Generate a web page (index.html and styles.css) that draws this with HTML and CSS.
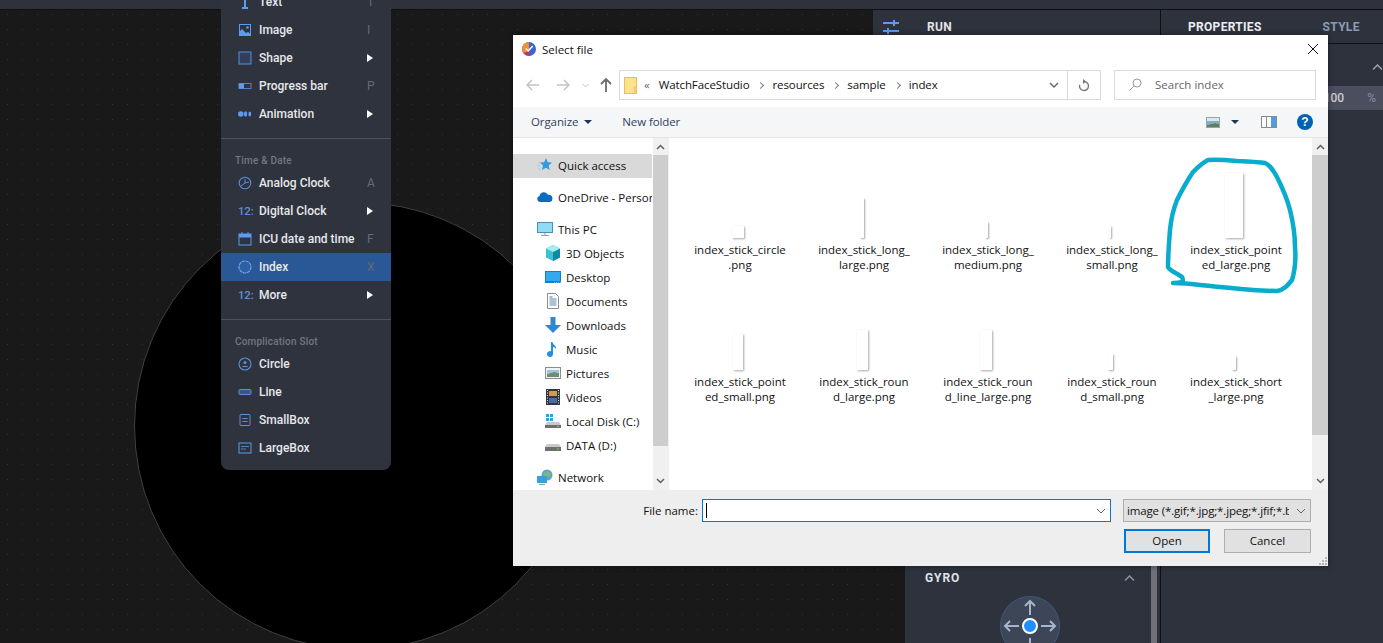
FILE: index.html
```html
<!DOCTYPE html>
<html lang="en">
<head>
    <meta charset="UTF-8">
    <title>Select file</title>
    <link rel="stylesheet" href="styles.css">
</head>
<body>
<div class="stage">
    <div class="topbar"></div>
    <div class="workspace">
        <div class="canvas"></div>
        <div class="run">
            <div class="run-head">
                <svg class="ico16" viewBox="0 0 16 16"><path d="M0 4h16M0 12h16" stroke="#5b9bf0" stroke-width="2"/><path d="M11 1v6M5 9v6" stroke="#5b9bf0" stroke-width="2"/></svg>
                <span>RUN</span>
            </div>
            <div class="run-body">
                <div class="run-gutter"></div>
                <div class="run-main">
                    <div class="gyro">
                        <div class="gyro-title">
                            <span>GYRO</span>
                            <svg width="11" height="6" viewBox="0 0 11 6"><path d="M1 5.500l4.500-4.500 4.500 4.500" fill="none" stroke="#8b92a3" stroke-width="1.500"/></svg>
                        </div>
                        <svg class="gyro-pad" width="60" height="60" viewBox="0 0 60 60">
                            <circle cx="30" cy="30" r="29.500" fill="#3d4657" stroke="#3e5a80"/>
                            <g fill="none" stroke="#a6b4ce" stroke-width="2">
                                <path d="M30 19V5.500M25 10l5-5 5 5"/>
                                <path d="M19 30H5.500M10 25l-5 5 5 5"/>
                                <path d="M41 30h13.500M50 25l5 5-5 5"/>
                                <path d="M30 42v14"/>
                            </g>
                            <circle cx="30" cy="30" r="7" fill="#1e8fff" stroke="#fff" stroke-width="2"/>
                        </svg>
                    </div>
                </div>
                <div class="run-scroll"></div>
            </div>
        </div>
        <div class="props">
            <div class="props-tabs">
                <span class="tab-on">PROPERTIES</span>
                <span class="tab-off">STYLE</span>
            </div>
            <div class="props-chev">
                <svg width="11" height="6" viewBox="0 0 11 6"><path d="M1 5.500l4.500-4.500 4.500 4.500" fill="none" stroke="#9aa0ae" stroke-width="1.500"/></svg>
            </div>
            <div class="props-field"><span>100</span><span class="unit">%</span></div>
        </div>
    </div>

    <div class="circle"></div>

    <div class="menu">
        <div class="menu-row">
            <svg class="mi" viewBox="0 0 14 14"><path d="M7 0v13M4 13h6" stroke="#5b9bf0" stroke-width="2" fill="none"/></svg>
            <span class="mt">Text</span><span class="key">T</span>
        </div>
        <div class="menu-row">
            <svg class="mi" viewBox="0 0 14 14"><rect x="1.500" y="1.500" width="11" height="11" fill="none" stroke="#5b9bf0"/><path d="M1 13V9l3-3 4 4 2-1 3 2v2z" fill="#5b9bf0"/><circle cx="9.500" cy="4.500" r="1.300" fill="#5b9bf0"/></svg>
            <span class="mt">Image</span><span class="key">I</span>
        </div>
        <div class="menu-row">
            <svg class="mi" viewBox="0 0 14 14"><rect x="1" y="1" width="12" height="12" fill="#2f3f5c" stroke="#4f82c8" stroke-width="1.200"/></svg>
            <span class="mt">Shape</span><span class="arrow"></span>
        </div>
        <div class="menu-row">
            <svg class="mi" viewBox="0 0 14 14"><rect x="1" y="4.500" width="12" height="5" fill="none" stroke="#4f82c8"/><rect x="1" y="4.500" width="5" height="5" fill="#5b9bf0"/></svg>
            <span class="mt">Progress bar</span><span class="key">P</span>
        </div>
        <div class="menu-row">
            <svg class="mi" viewBox="0 0 14 14"><circle cx="2.800" cy="7" r="2.800" fill="#5b9bf0"/><ellipse cx="7.600" cy="7" rx="1.600" ry="2.700" fill="#5b9bf0"/><ellipse cx="11.800" cy="7" rx="1.400" ry="2.500" fill="#5b9bf0"/></svg>
            <span class="mt">Animation</span><span class="arrow"></span>
        </div>
        <div class="menu-sep"></div>
        <div class="menu-label">Time &amp; Date</div>
        <div class="menu-row">
            <svg class="mi" viewBox="0 0 14 14"><circle cx="7" cy="7" r="5.800" fill="none" stroke="#5b8fd8" stroke-width="1.100"/><path d="M7 3v4l4-1M7 7l-4 3" fill="none" stroke="#5b8fd8"/></svg>
            <span class="mt">Analog Clock</span><span class="key">A</span>
        </div>
        <div class="menu-row">
            <span class="mi mi-txt">12:</span>
            <span class="mt">Digital Clock</span><span class="arrow"></span>
        </div>
        <div class="menu-row">
            <svg class="mi" viewBox="0 0 14 14"><rect x="1" y="2" width="12" height="11" fill="none" stroke="#5b9bf0"/><rect x="1" y="2" width="12" height="3.500" fill="#5b9bf0"/><path d="M4 0v3M10 0v3" stroke="#5b9bf0"/></svg>
            <span class="mt">ICU date and time</span><span class="key">F</span>
        </div>
        <div class="menu-row menu-row-on">
            <svg class="mi" viewBox="0 0 14 14"><circle cx="7" cy="7" r="6" fill="#2f5fa3" stroke="#6aa3ee" stroke-width="1.200" stroke-dasharray="3.400 .6"/></svg>
            <span class="mt">Index</span><span class="key">X</span>
        </div>
        <div class="menu-row">
            <span class="mi mi-txt">12:</span>
            <span class="mt">More</span><span class="arrow"></span>
        </div>
        <div class="menu-sep"></div>
        <div class="menu-label">Complication Slot</div>
        <div class="menu-row">
            <svg class="mi" viewBox="0 0 14 14"><circle cx="7" cy="7" r="6" fill="none" stroke="#5b8fd8" stroke-width="1.100"/><circle cx="7" cy="5.500" r="1.500" fill="#5b8fd8"/><path d="M4.500 9.500h5" stroke="#5b8fd8" stroke-width="1.200"/></svg>
            <span class="mt">Circle</span>
        </div>
        <div class="menu-row">
            <svg class="mi" viewBox="0 0 14 14"><rect x="1" y="4.500" width="12" height="5" rx="1" fill="#3b5680" stroke="#5b8fd8"/></svg>
            <span class="mt">Line</span>
        </div>
        <div class="menu-row">
            <svg class="mi" viewBox="0 0 14 14"><rect x="2" y="1.500" width="10" height="11" rx="1" fill="none" stroke="#5b8fd8"/><path d="M4.500 5.500h5M4.500 8.500h5" stroke="#5b8fd8"/></svg>
            <span class="mt">SmallBox</span>
        </div>
        <div class="menu-row">
            <svg class="mi" viewBox="0 0 14 14"><rect x="1" y="2" width="12" height="10" fill="none" stroke="#5b9bf0"/><path d="M3 5.500h8M3 8h5" stroke="#4f82c8"/></svg>
            <span class="mt">LargeBox</span>
        </div>
    </div>

    <div class="dialog">
        <div class="dlg-title">
            <svg class="app-ico" viewBox="0 0 14 14"><circle cx="7" cy="7" r="7" fill="#3f62d8"/><path d="M7 0a7 7 0 0 0-6 10.500L7 14z" fill="#f0912f"/><path d="M1.500 11a7 7 0 0 0 7 2.800L7 9z" fill="#b03a6a"/><path d="M3.800 6.500l2.400 2.400 4.500-5" fill="none" stroke="#fff" stroke-width="1.500"/></svg>
            <span class="dlg-name">Select file</span>
            <svg class="dlg-close" width="10" height="10" viewBox="0 0 10 10"><path d="M0 0l10 10M10 0L0 10" stroke="#111" stroke-width="1"/></svg>
        </div>

        <div class="dlg-nav">
            <svg class="nav-btn" width="14" height="12" viewBox="0 0 14 12"><path d="M13 6H1M6 1L1 6l5 5" fill="none" stroke="#c4c4c4" stroke-width="1.500"/></svg>
            <svg class="nav-btn nav-fwd" width="14" height="12" viewBox="0 0 14 12"><path d="M1 6h12M8 1l5 5-5 5" fill="none" stroke="#c4c4c4" stroke-width="1.500"/></svg>
            <svg class="nav-btn nav-drop" width="7" height="5" viewBox="0 0 7 5"><path d="M.5 1l3 3 3-3" fill="none" stroke="#c4c4c4"/></svg>
            <svg class="nav-btn nav-up" width="12" height="14" viewBox="0 0 12 14"><path d="M6 14V1M1 6l5-5 5 5" fill="none" stroke="#6d6d6d" stroke-width="1.800"/></svg>
            <div class="addr">
                <svg class="folder" width="13" height="17" viewBox="0 0 13 17"><rect x=".5" y=".5" width="12" height="16" fill="#fbe28f" stroke="#eac14d"/><rect x="10" y="10" width="2.500" height="6.500" fill="#f5d26a" stroke="#eac14d" stroke-width=".5"/></svg>
                <span class="addr-more">«</span>
                <span class="crumb">WatchFaceStudio</span><span class="crumb-sep"></span>
                <span class="crumb">resources</span><span class="crumb-sep"></span>
                <span class="crumb">sample</span><span class="crumb-sep"></span>
                <span class="crumb">index</span>
                <svg class="addr-drop" width="10" height="6" viewBox="0 0 10 6"><path d="M1 1l4 4 4-4" fill="none" stroke="#6d6d6d" stroke-width="1.500"/></svg>
                <div class="addr-refresh">
                    <svg width="12" height="13" viewBox="0 0 12 13"><path d="M6 2.500a4.500 4.500 0 1 1-4.300 3.200" fill="none" stroke="#777" stroke-width="1.300"/><path d="M5 0l3 2.500L5 5z" fill="#777"/></svg>
                </div>
            </div>
            <div class="search">
                <svg width="13" height="13" viewBox="0 0 13 13"><circle cx="8" cy="5" r="4" fill="none" stroke="#9a9a9a"/><path d="M5 8l-4.500 4.500" stroke="#9a9a9a"/></svg>
                <span>Search index</span>
            </div>
        </div>

        <div class="dlg-tools">
            <span class="tool">Organize</span><span class="tool-caret"></span>
            <span class="tool tool-new">New folder</span>
            <svg class="tool-view" width="14" height="11" viewBox="0 0 14 11"><rect x=".5" y=".5" width="13" height="10" fill="#dde6ee" stroke="#9aa3ab"/><path d="M1 4h12v3l-4-1-8 2z" fill="#7fb0c8"/><path d="M1 8l8-2 4 1v3H1z" fill="#5c8060"/></svg>
            <span class="tool-caret tool-caret-b"></span>
            <svg class="tool-pane" width="16" height="12" viewBox="0 0 16 12"><rect x=".5" y=".5" width="15" height="11" fill="#fff" stroke="#8a8a8a"/><rect x="5" y="1" width="1" height="10" fill="#8a8a8a"/><rect x="10" y="1" width="5" height="10" fill="#4f9fe0"/></svg>
            <span class="tool-help">?</span>
        </div>

        <div class="dlg-main">
            <div class="tree">
                <div class="tree-row tree-row-on">
                    <svg class="ti" viewBox="0 0 16 16"><path d="M9 1l1.800 4.200L15 5.600l-3.300 3 1 4.400L9 10.700 5 13l1-4.400-3-3 4.200-.4z" fill="#2e9be6"/><path d="M1 6h3M0 9h3M1 12h3" stroke="#9cc9ec"/></svg>
                    <span>Quick access</span>
                </div>
                <div class="tree-row tree-gap">
                    <svg class="ti" viewBox="0 0 16 16"><path d="M3 13a3 3 0 0 1-.5-5.900 4.500 4.500 0 0 1 8.500-1.300 3.800 3.800 0 0 1 4.500 3.700A3.500 3.500 0 0 1 13 13z" fill="#0f6cbd"/></svg>
                    <span>OneDrive - Personal</span>
                </div>
                <div class="tree-row tree-gap">
                    <svg class="ti" viewBox="0 0 16 16"><rect x=".5" y="1.500" width="15" height="10" fill="#8fdcf7" stroke="#4a8fb5"/><path d="M4 14.500h8M8 12v2" stroke="#8aa0ad"/></svg>
                    <span>This PC</span>
                </div>
                <div class="tree-row tree-sub">
                    <svg class="ti" viewBox="0 0 16 16"><path d="M8 0l7 3.500v9L8 16 1 12.500v-9z" fill="#3cc3d3"/><path d="M8 7l7-3.500v9L8 16z" fill="#14889c"/><path d="M8 0l7 3.500L8 7 1 3.500z" fill="#a5ecf2"/></svg>
                    <span>3D Objects</span>
                </div>
                <div class="tree-row tree-sub">
                    <svg class="ti" viewBox="0 0 16 16"><rect x="0" y="2" width="16" height="12" fill="#0f7fd4"/><rect x="1" y="3" width="14" height="9" fill="#35a8ee"/><path d="M9 14h7" stroke="#fff" stroke-dasharray="1 1"/></svg>
                    <span>Desktop</span>
                </div>
                <div class="tree-row tree-sub">
                    <svg class="ti" viewBox="0 0 16 16"><path d="M2.500.5h8l3 3v12h-11z" fill="#fff" stroke="#8d8d8d"/><path d="M4.500 6h7M4.500 8h7M4.500 10h7M4.500 12h7" stroke="#5a86a8"/><path d="M4.500 4h3" stroke="#2a7fc0"/></svg>
                    <span>Documents</span>
                </div>
                <div class="tree-row tree-sub">
                    <svg class="ti" viewBox="0 0 16 16"><path d="M5.500 0h5v8H16l-8 8-8-8h5.500z" fill="#2b87d8"/></svg>
                    <span>Downloads</span>
                </div>
                <div class="tree-row tree-sub">
                    <svg class="ti" viewBox="0 0 16 16"><path d="M6 1h1.500c.5 3 4 3.500 3.500 7-1-1.500-2.200-2-3-2v7a3 3 0 1 1-2-2.800z" fill="#1e8fe6"/></svg>
                    <span>Music</span>
                </div>
                <div class="tree-row tree-sub">
                    <svg class="ti" viewBox="0 0 16 16"><rect x=".5" y="2.500" width="15" height="11" fill="#eef3f6" stroke="#8d8d8d"/><path d="M2 5h12v3l-5-1-7 2z" fill="#a3c5dc"/><path d="M2 9l7-2 5 1v4H2z" fill="#6b8f70"/></svg>
                    <span>Pictures</span>
                </div>
                <div class="tree-row tree-sub">
                    <svg class="ti" viewBox="0 0 16 16"><rect x="1" y="0" width="14" height="16" fill="#33363a"/><rect x="4" y="2" width="8" height="5" fill="#c9a23a"/><rect x="4" y="9" width="8" height="5" fill="#4a6fa8"/><path d="M2.500 1v14M13.500 1v14" stroke="#ddd" stroke-dasharray="1 1.500"/></svg>
                    <span>Videos</span>
                </div>
                <div class="tree-row tree-sub">
                    <svg class="ti" viewBox="0 0 16 16"><path d="M1 1h3v3H1zM5 1h3v3H5zM1 5h3v3H1zM5 5h3v3H5z" fill="#1ea7e8"/><path d="M2 9h12l2 3v3H0v-3z" fill="#c9c9c9"/><rect x="0" y="12" width="16" height="3" fill="#6f6f6f"/><rect x="12" y="13" width="2" height="1" fill="#6fd84a"/></svg>
                    <span>Local Disk (C:)</span>
                </div>
                <div class="tree-row tree-sub">
                    <svg class="ti" viewBox="0 0 16 16"><path d="M2 7h12l2 3v4H0v-4z" fill="#c9c9c9"/><rect x="0" y="10" width="16" height="4" fill="#6f6f6f"/><rect x="12" y="11.500" width="2" height="1" fill="#6fd84a"/></svg>
                    <span>DATA (D:)</span>
                </div>
                <div class="tree-row tree-gap">
                    <svg class="ti" viewBox="0 0 16 16"><circle cx="10" cy="6" r="5.500" fill="#5aa6c8"/><path d="M6 3c2 1 5 0 7-1l1 5-6 3z" fill="#7fb58a"/><rect x="0" y="7" width="10" height="7" fill="#3b9fdc"/><path d="M2 15.500h6" stroke="#8aa0ad"/></svg>
                    <span>Network</span>
                </div>
            </div>
            <div class="sbar">
                <svg class="sbar-btn" width="9" height="6" viewBox="0 0 9 6"><path d="M1 5l3.500-3.500L8 5" fill="none" stroke="#606060" stroke-width="1.500"/></svg>
                <div class="sbar-thumb sbar-thumb-l"></div>
                <svg class="sbar-btn sbar-down" width="9" height="6" viewBox="0 0 9 6"><path d="M1 1l3.500 3.500L8 1" fill="none" stroke="#606060" stroke-width="1.500"/></svg>
            </div>
            <div class="files">
                <div class="file"><div class="thumb-box"><div class="thumb t-circle"></div></div><div class="fname">index_stick_circle<br>.png</div></div>
                <div class="file"><div class="thumb-box"><div class="thumb t-long-l"></div></div><div class="fname">index_stick_long_<br>large.png</div></div>
                <div class="file"><div class="thumb-box"><div class="thumb t-long-m"></div></div><div class="fname">index_stick_long_<br>medium.png</div></div>
                <div class="file"><div class="thumb-box"><div class="thumb t-long-s"></div></div><div class="fname">index_stick_long_<br>small.png</div></div>
                <div class="file"><div class="thumb-box"><div class="thumb t-point-l"></div></div><div class="fname">index_stick_point<br>ed_large.png</div></div>
                <div class="file"><div class="thumb-box"><div class="thumb t-point-s"></div></div><div class="fname">index_stick_point<br>ed_small.png</div></div>
                <div class="file"><div class="thumb-box"><div class="thumb t-round-l"></div></div><div class="fname">index_stick_roun<br>d_large.png</div></div>
                <div class="file"><div class="thumb-box"><div class="thumb t-round-ll"></div></div><div class="fname">index_stick_roun<br>d_line_large.png</div></div>
                <div class="file"><div class="thumb-box"><div class="thumb t-round-s"></div></div><div class="fname">index_stick_roun<br>d_small.png</div></div>
                <div class="file"><div class="thumb-box"><div class="thumb t-short-l"></div></div><div class="fname">index_stick_short<br>_large.png</div></div>
            </div>
            <div class="sbar sbar-r">
                <svg class="sbar-btn" width="9" height="6" viewBox="0 0 9 6"><path d="M1 5l3.500-3.500L8 5" fill="none" stroke="#606060" stroke-width="1.500"/></svg>
                <div class="sbar-thumb sbar-thumb-r"></div>
                <svg class="sbar-btn sbar-down" width="9" height="6" viewBox="0 0 9 6"><path d="M1 1l3.500 3.500L8 1" fill="none" stroke="#606060" stroke-width="1.500"/></svg>
            </div>
        </div>

        <div class="dlg-foot">
            <div class="foot-row">
                <label class="foot-label" for="fname">File name:</label>
                <div class="foot-input">
                    <span class="caret"></span>
                    <svg width="10" height="6" viewBox="0 0 10 6"><path d="M1 1l4 4 4-4" fill="none" stroke="#666"/></svg>
                </div>
                <div class="foot-combo">
                    <span class="combo-text">image (*.gif;*.jpg;*.jpeg;*.jfif;*.bmp)</span>
                    <svg width="10" height="6" viewBox="0 0 10 6"><path d="M1 1l4 4 4-4" fill="none" stroke="#666"/></svg>
                </div>
            </div>
            <div class="foot-btns">
                <button class="btn btn-main" type="button">Open</button>
                <button class="btn" type="button">Cancel</button>
            </div>
            <svg class="grip" width="8" height="8" viewBox="0 0 8 8"><path d="M6 0h2v2H6zM3 3h2v2H3zM6 3h2v2H6zM0 6h2v2H0zM3 6h2v2H3zM6 6h2v2H6z" fill="#b5b5b5"/></svg>
        </div>
    </div>

    <svg class="scribble" width="140" height="146" viewBox="1160 152 140 146">
        <path d="M1173 283C1190 283 1205 286 1220 287C1240 289 1260 291 1277 291C1284 290 1288 285 1292 280C1295 270 1296 258 1295 247C1295 235 1293 222 1290 210C1287 198 1282 187 1277 177C1273 170 1270 165 1265 163C1255 162 1247 161 1237 161C1227 160 1217 159 1208 160C1202 163 1198 167 1193 172C1187 181 1182 190 1177 200C1173 210 1171 220 1170 230C1169 243 1168 255 1168 267C1171 272 1177 273 1182 277C1183 279 1183 281 1182 282C1179 283 1176 283 1173 283" fill="none" stroke="#0aaccd" stroke-width="4.500" stroke-linecap="round" stroke-linejoin="round"/>
    </svg>
</div>
</body>
</html>
```

FILE: styles.css
```css
* {
    box-sizing: border-box;
}
body {
    margin: 0;
    overflow: hidden;
    font-family: Roboto, sans-serif;
}
svg {
    display: block;
    flex: none;
}
.stage {
    position: relative;
    width: 1383px;
    height: 643px;
    overflow: hidden;
    background-color: #191919;
    background-image: radial-gradient(circle, #333 0.7px, transparent 1px);
    background-size: 15px 15px;
    background-position: 0 7px;
}
.topbar {
    height: 10px;
    background: #2e323d;
    border-bottom: 1px solid #111;
}
.workspace {
    display: flex;
    height: 633px;
}
.canvas {
    flex: 1;
}

/* run column */
.run {
    width: 288px;
    display: flex;
    flex-direction: column;
    border-right: 1px solid #0f0f0f;
}
.run-head {
    height: 33px;
    background: #2e323d;
    display: flex;
    align-items: center;
    gap: 28px;
    padding-left: 10px;
    color: #e4e4e4;
    font-size: 12px;
    font-weight: 700;
    letter-spacing: 0.3px;
}
.ico16 {
    width: 16px;
    height: 16px;
}
.run-body {
    flex: 1;
    display: flex;
    min-height: 0;
}
.run-gutter {
    width: 32px;
}
.run-main {
    flex: 1;
    background: #2e323d;
    display: flex;
    flex-direction: column;
    justify-content: flex-end;
}
.run-scroll {
    width: 9px;
    border-right: 3px solid #2e323d;
    background-color: #6f7078;
}
.gyro {
    height: 75px;
    overflow: hidden;
}
.gyro-title {
    height: 20px;
    display: flex;
    align-items: center;
    justify-content: space-between;
    padding: 0 16px 0 20px;
    color: #dfe3ea;
    font-size: 12px;
    font-weight: 700;
    letter-spacing: 0.9px;
}
.gyro-pad {
    margin: 8px 0 0 95px;
}

/* properties column */
.props {
    width: 222px;
    background: #2e323d;
}
.props-tabs {
    height: 34px;
    display: flex;
    gap: 61px;
    align-items: center;
    padding-left: 27px;
    border-bottom: 1px solid #111;
    font-size: 12px;
    font-weight: 700;
    letter-spacing: 0.3px;
}
.tab-on {
    color: #eceef2;
}
.tab-off {
    color: #8b9cb8;
}
.props-chev {
    height: 42px;
    padding: 20px 0 0 211px;
}
.props-field {
    height: 24px;
    margin-left: 100px;
    background: #4a4f60;
    color: #c9ccd3;
    font-size: 12px;
    display: flex;
    align-items: center;
    justify-content: flex-end;
    gap: 23px;
    padding-right: 7px;
    font-weight: 500;
}
.unit {
    color: #80859a;
}

/* watch face */
.circle {
    position: absolute;
    left: 134px;
    top: 202px;
    width: 448px;
    height: 448px;
    border-radius: 50%;
    background: #000;
    border: 1px solid #404040;
}

/* insert menu */
.menu {
    position: absolute;
    left: 221px;
    top: -12px;
    width: 170px;
    padding-bottom: 8px;
    background: #2f333e;
    border-radius: 0 0 8px 8px;
}
.menu-row {
    height: 28px;
    display: flex;
    align-items: center;
    padding-left: 17px;
    color: #e6e8ec;
    font-size: 12px;
    font-weight: 500;
}
.menu-row-on {
    background: #2a5795;
}
.mi {
    width: 14px;
    height: 14px;
    margin-right: 7px;
    flex: none;
}
.mi-txt {
    color: #5b8fd8;
    font-size: 11.5px;
    letter-spacing: -0.2px;
    line-height: 14px;
    white-space: nowrap;
}
.mt {
    flex: 1;
}
.key {
    width: 24px;
    color: #666a76;
    font-weight: 400;
}
.arrow {
    width: 0;
    height: 0;
    margin-right: 18px;
    border-left: 6px solid #fff;
    border-top: 4px solid transparent;
    border-bottom: 4px solid transparent;
}
.menu-sep {
    height: 1px;
    margin-top: 10px;
    background: #4d5060;
}
.menu-label {
    height: 30px;
    padding: 15px 0 0 14px;
    color: #74777f;
    font-size: 10px;
    font-weight: 500;
    line-height: 14px;
    letter-spacing: 0.2px;
}

/* file dialog */
.dialog {
    position: absolute;
    left: 513px;
    top: 35px;
    width: 815px;
    height: 531px;
    display: flex;
    flex-direction: column;
    background: #fff;
    box-shadow: 0 0 6px rgba(0, 0, 0, 0.45);
    font-family: "Open Sans", sans-serif;
    font-size: 11.5px;
    color: #111;
}
.dlg-title {
    height: 30px;
    display: flex;
    align-items: center;
    padding: 0 10px 2px 9px;
}
.app-ico {
    width: 14px;
    height: 14px;
}
.dlg-name {
    flex: 1;
    margin-left: 6px;
}
.dlg-nav {
    height: 42px;
    display: flex;
    align-items: flex-start;
    padding: 5px 12px 0 13px;
}
.nav-btn {
    margin-top: 9px;
}
.nav-fwd {
    margin-left: 16px;
}
.nav-drop {
    margin: 13px 0 0 12px;
}
.nav-up {
    margin: 8px 0 0 11px;
}
.addr {
    width: 482px;
    height: 30px;
    margin-left: 7px;
    display: flex;
    align-items: center;
    gap: 9px;
    padding: 0 0 2px 4px;
    border: 1px solid #d9d9d9;
}
.folder {
    margin: 2px -2px 0 0;
}
.addr-more {
    color: #666;
}
.crumb {
    letter-spacing: -0.1px;
}
.crumb-sep {
    width: 5px;
    height: 5px;
    margin-top: 2px;
    border-top: 1.500px solid #808080;
    border-right: 1.500px solid #808080;
    transform: rotate(45deg);
}
.addr-drop {
    margin: 2px -1px 0 auto;
}
.addr-refresh {
    width: 33px;
    height: 28px;
    margin-bottom: -2px;
    display: flex;
    align-items: center;
    justify-content: center;
    border-left: 1px solid #d9d9d9;
}
.search {
    width: 202px;
    height: 30px;
    margin-left: 13px;
    display: flex;
    align-items: center;
    gap: 13px;
    padding: 0 0 2px 14px;
    border: 1px solid #d9d9d9;
    color: #666;
}
.dlg-tools {
    height: 31px;
    display: flex;
    align-items: center;
    padding: 0 15px 0 18px;
    background: #f5f6f7;
    border-bottom: 1px solid #e5e5e5;
    color: #33415c;
}
.tool {
    margin-top: -2px;
    letter-spacing: -0.1px;
}
.tool-caret {
    width: 0;
    height: 0;
    margin-left: 6px;
    border-top: 4px solid #1f3558;
    border-left: 4px solid transparent;
    border-right: 4px solid transparent;
}
.tool-new {
    margin-left: 30px;
}
.tool-view {
    margin-left: auto;
}
.tool-caret-b {
    margin-left: 11px;
}
.tool-pane {
    margin-left: 22px;
}
.tool-help {
    width: 16px;
    height: 16px;
    margin-left: 20px;
    border-radius: 50%;
    background: #0063b1;
    color: #fff;
    font-family: "Liberation Sans", sans-serif;
    font-size: 12px;
    font-weight: 700;
    line-height: 16px;
    text-align: center;
}
.dlg-main {
    height: 352px;
    display: flex;
}
.tree {
    width: 140px;
    padding-top: 16px;
    overflow: hidden;
}
.tree-row {
    height: 24px;
    width: 139px;
    display: flex;
    align-items: center;
    gap: 5px;
    padding: 0 0 2px 24px;
    white-space: nowrap;
    overflow: hidden;
}
.tree-row-on {
    background: #d9d9d9;
}
.tree-gap {
    margin-top: 8px;
}
.tree-sub {
    padding-left: 32px;
}
.ti {
    width: 16px;
    height: 16px;
}
.sbar {
    width: 15px;
    flex: none;
    background: #f0f0f0;
    display: flex;
    flex-direction: column;
    align-items: center;
}
.sbar-r {
    width: 16px;
}
.sbar-btn {
    margin: 6px 0 5px;
}
.sbar-thumb {
    width: 100%;
    background: #cdcdcd;
}
.sbar-thumb-l {
    height: 291px;
}
.sbar-thumb-r {
    height: 280px;
}
.sbar-down {
    margin: auto 0 6px;
}
.files {
    flex: 1;
    display: grid;
    grid-template-columns: repeat(5, 124px);
    grid-auto-rows: 132px;
    padding-left: 9px;
    border-left: 1px solid #f0f0f0;
}
.thumb-box {
    height: 100px;
    display: flex;
    align-items: flex-end;
    justify-content: center;
    padding-right: 4px;
}
.thumb {
    background: #fff;
    box-shadow: 1px 1px 2px rgba(0, 0, 0, 0.35);
}
.t-circle { width: 12px; height: 12px; }
.t-long-l { width: 4px; height: 40px; }
.t-long-m { width: 3px; height: 16px; }
.t-long-s { width: 2px; height: 12px; }
.t-point-l { width: 18px; height: 65px; }
.t-point-s { width: 10px; height: 36px; }
.t-round-l { width: 11px; height: 40px; }
.t-round-ll { width: 12px; height: 40px; }
.t-round-s { width: 5px; height: 16px; }
.t-short-l { width: 4px; height: 14px; }
.fname {
    margin-top: 4px;
    line-height: 15px;
    text-align: center;
}
.dlg-foot {
    flex: 1;
    position: relative;
    background: #eee;
    padding-top: 9px;
}
.foot-row {
    display: flex;
    align-items: center;
    height: 23px;
}
.foot-label {
    width: 185px;
    text-align: right;
    margin-right: -1px;
}
.foot-input {
    width: 409px;
    height: 23px;
    margin-left: 5px;
    display: flex;
    align-items: center;
    justify-content: space-between;
    padding: 0 4px 0 3px;
    background: #fff;
    border: 1px solid #0078d7;
}
.caret {
    width: 1px;
    height: 15px;
    background: #000;
}
.foot-combo {
    width: 188px;
    height: 23px;
    margin-left: 12px;
    display: flex;
    align-items: center;
    justify-content: space-between;
    padding: 0 4px 0 3px;
    background: #e1e1e1;
    border: 1px solid #adadad;
}
.combo-text {
    width: 162px;
    overflow: hidden;
    white-space: nowrap;
    letter-spacing: -0.15px;
}
.foot-btns {
    display: flex;
    justify-content: flex-end;
    gap: 14px;
    margin-top: 7px;
    padding-right: 17px;
}
.btn {
    width: 87px;
    height: 24px;
    padding: 0 0 2px;
    background: #e1e1e1;
    border: 1px solid #adadad;
    font-family: inherit;
    font-size: 11.5px;
    color: #111;
}
.btn-main {
    width: 86px;
    border: 2px solid #0078d7;
}
.grip {
    position: absolute;
    right: 1px;
    bottom: 1px;
}
.scribble {
    position: absolute;
    left: 1160px;
    top: 152px;
}
```
